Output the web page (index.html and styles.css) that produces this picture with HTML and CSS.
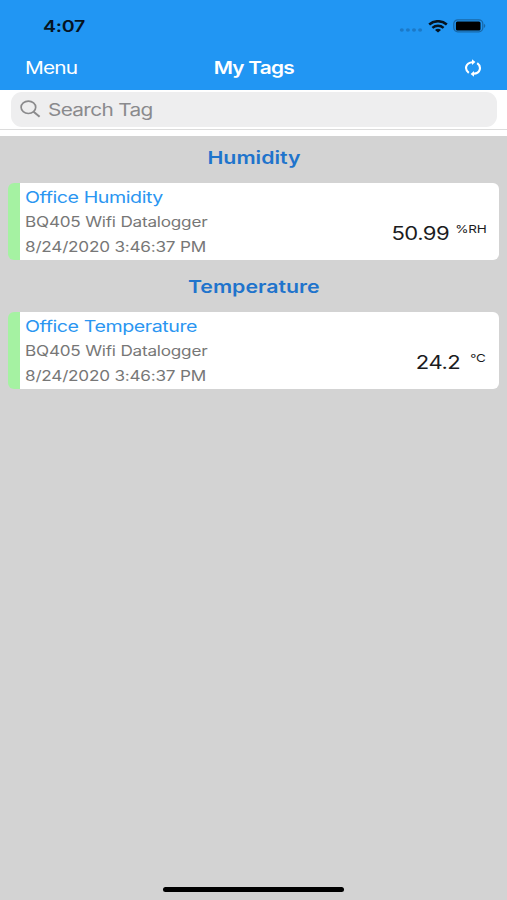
FILE: index.html
```html
<!DOCTYPE html>
<html lang="en">
<head>
    <meta charset="UTF-8">
    <meta name="viewport" content="width=device-width, initial-scale=1.0">
    <title>My Tags</title>
    <link rel="stylesheet" href="styles.css">
</head>
<body>
<header class="header">
    <div class="status-bar">
        <span class="wide clock">4:07</span>
        <div class="status-icons">
            <svg width="24" height="6" viewBox="0 0 24 6" fill="#1b79c8">
                <ellipse cx="2.8" cy="3" rx="2" ry="1.7"/>
                <ellipse cx="8.9" cy="3" rx="2" ry="1.7"/>
                <ellipse cx="15" cy="3" rx="2" ry="1.7"/>
                <ellipse cx="21.1" cy="3" rx="2" ry="1.7"/>
            </svg>
            <svg class="wifi" width="20" height="13" viewBox="0 0 20 13" fill="none" stroke="#06131f" stroke-width="2.5">
                <path d="M1.2 4.5C6.2 0.1 13.8 0.1 18.8 4.5"/>
                <path d="M4.4 7.9C7.6 5.1 12.4 5.1 15.6 7.9"/>
                <path d="M7 9.9C8.8 8.5 11.2 8.5 13 9.9L10 12.6Z" fill="#06131f" stroke="none"/>
            </svg>
            <svg class="battery" width="33" height="14" viewBox="0 0 33 14">
                <rect x="0.8" y="0.8" width="29" height="12" rx="4" fill="none" stroke="#1868a8" stroke-width="1.3"/>
                <rect x="2.9" y="2.4" width="24.6" height="9" rx="1.5" fill="#000"/>
                <path d="M31 4.7C32.8 5.5 32.8 8.1 31 8.9Z" fill="#1868a8"/>
            </svg>
        </div>
    </div>
    <nav class="nav-bar">
        <span class="wide menu">Menu</span>
        <span class="wide title">My Tags</span>
        <svg class="refresh" width="18" height="18" viewBox="0 0 18 18" fill="none" stroke="#fff" stroke-width="2.1">
            <path d="M4.8 13.8C0.2 10.4 1.4 3.6 8.6 3.2"/>
            <path d="M13.2 4.2C17.8 7.6 16.6 14.4 9.4 14.8"/>
            <path d="M8 0.2L11.4 3L8 5.9Z" fill="#fff" stroke="none"/>
            <path d="M10 12.1L6.6 15L10 17.8Z" fill="#fff" stroke="none"/>
        </svg>
    </nav>
</header>

<div class="search-bar">
    <div class="search-field">
        <svg width="21" height="18" viewBox="0 0 21 18" fill="none" stroke="#8a8a8c" stroke-width="1.7">
            <ellipse cx="8.4" cy="7.3" rx="7.3" ry="6.2"/>
            <path d="M13.6 11.8L19.6 16.8" stroke-width="2"/>
        </svg>
        <span class="wide placeholder">Search Tag</span>
    </div>
</div>

<main class="tag-list">
    <h2 class="group-title"><span class="wide">Humidity</span></h2>
    <div class="tag-card">
        <div class="tag-info">
            <span class="wide tag-name">Office Humidity</span>
            <span class="wide tag-device">BQ405 Wifi Datalogger</span>
            <span class="wide tag-date">8/24/2020 3:46:37 PM</span>
        </div>
        <div class="tag-reading">
            <span class="wide value">50.99</span>
            <span class="wide unit">%RH</span>
        </div>
    </div>

    <h2 class="group-title"><span class="wide">Temperature</span></h2>
    <div class="tag-card">
        <div class="tag-info">
            <span class="wide tag-name">Office Temperature</span>
            <span class="wide tag-device">BQ405 Wifi Datalogger</span>
            <span class="wide tag-date">8/24/2020 3:46:37 PM</span>
        </div>
        <div class="tag-reading celsius">
            <span class="wide value">24.2</span>
            <span class="wide unit">°C</span>
        </div>
    </div>
</main>

<footer class="home-area">
    <div class="home-indicator"></div>
</footer>
</body>
</html>
```
FILE: styles.css
```css
* {
    box-sizing: border-box;
}

body {
    display: flex;
    flex-direction: column;
    height: 100vh;
    margin: 0;
    overflow: hidden;
    background: #d3d3d3;
    font-family: Inter, "Liberation Sans", sans-serif;
}

/* All labels use a wide letterform */
.wide {
    display: inline-block;
    white-space: nowrap;
    transform: scaleX(1.2246);
    transform-origin: left center;
}

.header {
    height: 90px;
    background: #2196f3;
}

.status-bar {
    display: flex;
    justify-content: space-between;
    align-items: center;
    height: 52px;
    padding: 0 21px 0 43px;
}

.clock {
    color: #06131f;
    font-size: 16px;
    font-weight: 600;
    letter-spacing: -0.2px;
}

.status-icons {
    display: flex;
    align-items: center;
}

.status-icons svg:first-child {
    margin-top: 8px;
}

.wifi {
    margin-left: 5px;
}

.battery {
    margin-left: 5px;
}

.nav-bar {
    display: grid;
    grid-template-columns: 1fr auto 1fr;
    align-items: center;
    height: 31px;
    padding: 0 25px;
    color: #fff;
    font-size: 17px;
}

.menu {
    justify-self: start;
    padding-top: 1px;
    letter-spacing: -0.7px;
}

.title {
    padding-top: 1px;
    font-weight: 600;
    letter-spacing: -0.6px;
    transform-origin: center;
}

.refresh {
    justify-self: end;
}

/* Search */
.search-bar {
    height: 46px;
    padding: 2px 10px 0 11px;
    background: linear-gradient(#dcdcdc, #dcdcdc) 0 39px / 100% 1px no-repeat #fff;
}

.search-field {
    display: flex;
    align-items: center;
    gap: 7px;
    height: 35px;
    padding-left: 9px;
    border-radius: 11px;
    background: #eeeeef;
}

.search-field svg {
    margin-bottom: 1px;
}

.placeholder {
    color: #8a8a8d;
    font-size: 17px;
    letter-spacing: -0.55px;
}

/* Tag groups */
.tag-list {
    flex: 1;
    padding: 0 8px;
}

.group-title {
    height: 47px;
    margin: 0;
    color: #1f74cc;
    font-size: 17.4px;
    font-weight: 600;
    line-height: 44px;
    text-align: center;
}

.group-title .wide {
    transform-origin: center;
}

.tag-card {
    display: flex;
    justify-content: space-between;
    height: 77px;
    margin-bottom: 5px;
    overflow: hidden;
    border-left: 12px solid #a5f2a2;
    border-radius: 6px;
    background: #fff;
}

.tag-info {
    display: flex;
    flex-direction: column;
    align-items: flex-start;
    padding: 1px 0 0 5px;
}

.tag-name {
    color: #2b96f1;
    font-size: 16px;
    letter-spacing: -0.34px;
    line-height: 26px;
}

.tag-device,
.tag-date {
    color: #777;
    font-size: 14px;
    letter-spacing: -0.18px;
    line-height: 25px;
}

.tag-device {
    line-height: 24px;
}

.tag-date {
    line-height: 26px;
}

.tag-reading {
    display: flex;
    align-items: flex-start;
    gap: 11px;
    padding: 38px 13px 0 0;
    color: #1c1c1e;
}

.tag-reading.celsius {
    gap: 13px;
}

.tag-reading .wide {
    transform-origin: right center;
}

.value {
    font-size: 18px;
    letter-spacing: -0.4px;
    line-height: 26px;
}

.unit {
    font-size: 11px;
    letter-spacing: -0.2px;
    line-height: 17px;
}

/* Home indicator */
.home-area {
    display: flex;
    justify-content: center;
    align-items: flex-end;
    height: 34px;
    padding-bottom: 8px;
}

.home-indicator {
    width: 181px;
    height: 5px;
    border-radius: 3px;
    background: #000;
}
```
